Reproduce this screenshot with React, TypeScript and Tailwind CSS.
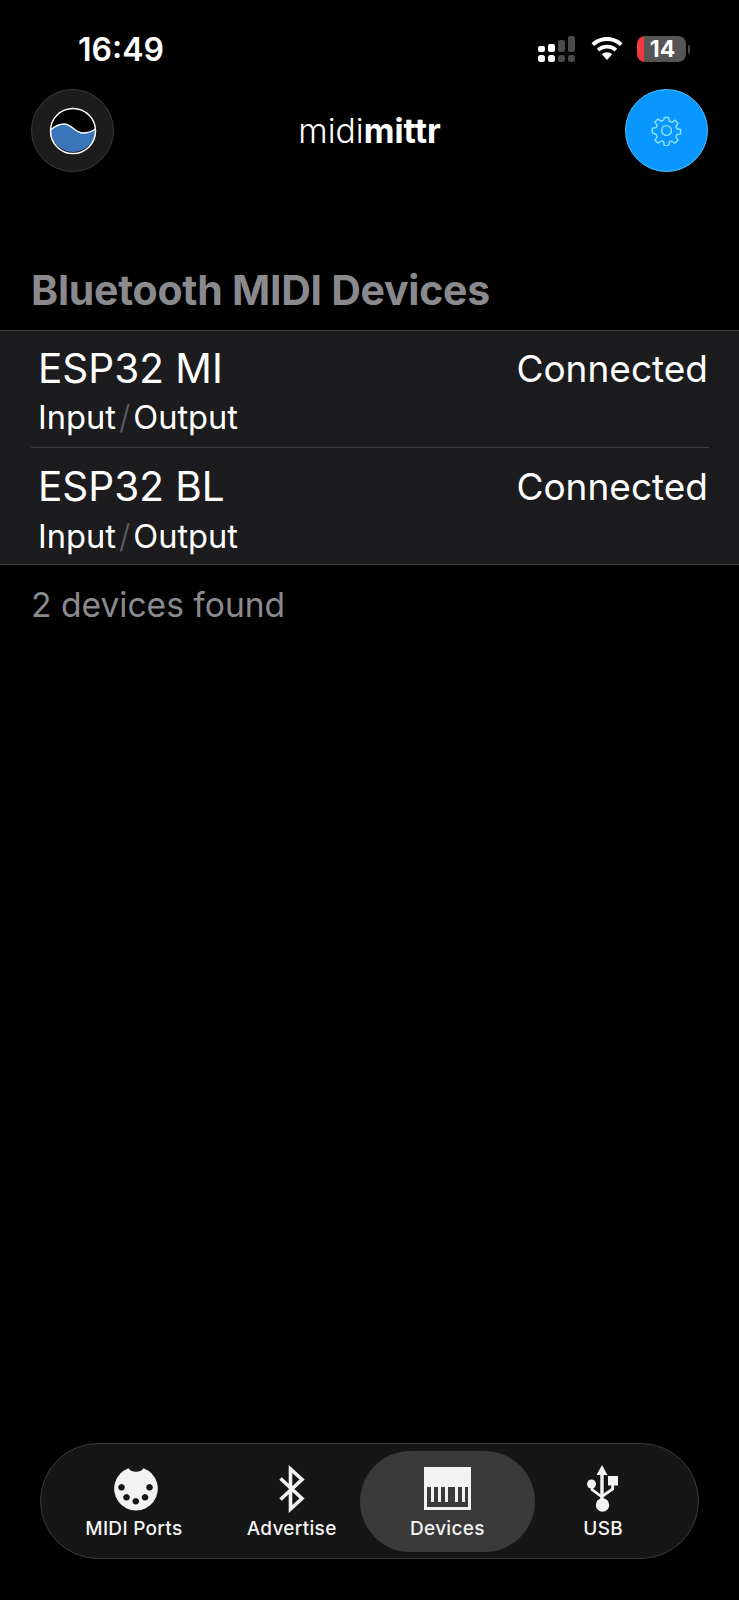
const Gear = () => (
  <svg width="31" height="31" viewBox="0 0 24 24" fill="none" stroke="#8fe4ff" strokeWidth="1.1" strokeLinejoin="round">
    <path d="M10.300 2h3.400l.5 2.900 1.900.8 2.400-1.700 2.400 2.400-1.700 2.400.8 1.900 2.900.5v3.400l-2.900.5-.8 1.900 1.700 2.400-2.400 2.400-2.400-1.700-1.900.8-.5 2.900h-3.400l-.5-2.900-1.900-.8-2.400 1.700-2.400-2.400 1.700-2.400-.8-1.900L1 13.700v-3.400l2.900-.5.8-1.900L3 5.500l2.400-2.400 2.400 1.700 1.900-.8z" />
    <circle cx="12" cy="12" r="3.800" />
  </svg>
);

const wave = "M1.500 23C6 19 10 17 15 17C23 17 26 26 34 26C39 26 43 24.500 46.500 22";

const Logo = () => (
  <svg width="48" height="48" viewBox="0 0 48 48">
    <circle cx="24" cy="24" r="22.500" fill="#000" />
    <path d={`${wave}A22.500 22.500 0 0 1 1.500 23Z`} fill="#3a75ba" />
    <path d={wave} fill="none" stroke="#fff" strokeWidth="1.500" />
    <circle cx="24" cy="24" r="22.500" fill="none" stroke="#fff" strokeWidth="1.500" />
  </svg>
);

const Din = () => (
  <svg width="44" height="44" viewBox="0 0 44 44">
    <path fillRule="evenodd" fill="#f2f2f2" d="M14.500 1.300A21.800 21.800 0 1 0 29.500 1.300C27 6 17 6 14.500 1.300ZM7.500 17a3.300 3.300 0 1 0 .01 0ZM35.500 17a3.300 3.300 0 1 0 .01 0ZM12.500 27a3.300 3.300 0 1 0 .01 0ZM31 27a3.300 3.300 0 1 0 .01 0ZM21.800 31a3.300 3.300 0 1 0 .01 0Z" />
  </svg>
);

const Bt = () => (
  <svg width="26" height="48" viewBox="0 0 26 48" fill="none" stroke="#f2f2f2" strokeWidth="3.600">
    <path d="M1.500 13.500 23 33.500 11.500 44V4L23 14.500 1.500 34.500" />
  </svg>
);

const Piano = () => (
  <svg width="47" height="43" viewBox="0 0 47 43">
    <path fillRule="evenodd" fill="#f2f2f2" d="M0 0H47V43H0ZM3 20V40H44V20H41V35H38V20H34V35H31V20H24V35H21V20H17V35H14V20H10V35H7V20Z" />
  </svg>
);

const Usb = () => (
  <svg width="32" height="47" viewBox="0 0 32 47">
    <path fill="#f2f2f2" d="M15 0l5.500 10h-3.800v25h-3.400V10H9.500Z" />
    <circle cx="15.500" cy="40" r="6.700" fill="#f2f2f2" />
    <circle cx="4.500" cy="19" r="4.500" fill="#f2f2f2" />
    <path fill="#f2f2f2" d="M21 11h10v9.500H21z" />
    <path d="M5 22v2.500L15 32M25.700 19v5L15.500 31" fill="none" stroke="#f2f2f2" strokeWidth="2.800" />
  </svg>
);

const Wifi = () => (
  <svg width="32" height="24" viewBox="0 0 32 24">
    <path fill="#fff" d="M16 0c6 0 11.500 2.300 15.500 6.200l-2.600 2.900C25.500 5.800 21 3.900 16 3.900S6.500 5.800 3.100 9.100L.5 6.200C4.500 2.300 10 0 16 0Z" />
    <path fill="#fff" d="M16 7.700c3.900 0 7.500 1.500 10.200 4l-2.600 2.900c-2-1.800-4.700-3-7.600-3s-5.600 1.200-7.600 3l-2.600-2.900c2.700-2.500 6.300-4 10.200-4Z" />
    <path fill="#fff" d="M16 15.300c2 0 3.800.7 5.100 1.900L16 23l-5.100-5.800c1.300-1.200 3.100-1.900 5.100-1.900Z" />
  </svg>
);

const Cell = () => (
  <svg width="37" height="26" viewBox="0 0 37 26">
    <g fill="#fff">
      <rect x="0" y="10" width="7" height="6" rx="2" />
      <rect x="10" y="8" width="7" height="8" rx="2" />
      <rect x="0" y="19" width="7" height="7" rx="2.500" />
      <rect x="10" y="19" width="7" height="7" rx="2.500" />
    </g>
    <g fill="#4a4a4a">
      <rect x="20" y="4" width="7" height="12" rx="2" />
      <rect x="30" y="0" width="7" height="16" rx="2" />
      <rect x="20" y="19" width="7" height="7" rx="2.500" />
      <rect x="30" y="19" width="7" height="7" rx="2.500" />
    </g>
  </svg>
);

const devices = ["ESP32 MI", "ESP32 BL"];

const tabs = [
  { label: "MIDI Ports", icon: <Din />, active: false, labelClass: "mr-[4px]" },
  { label: "Advertise", icon: <Bt />, active: false, labelClass: "" },
  { label: "Devices", icon: <Piano />, active: true, labelClass: "" },
  { label: "USB", icon: <Usb />, active: false, labelClass: "" },
];

export default function App() {
  return (
    <div className="flex h-[1600px] w-[739px] flex-col bg-black font-['Inter',sans-serif] text-white antialiased">
      <div className="flex h-[89px] items-start justify-between pl-[78px] pr-[49px] pt-[30px]">
        <span className="text-[32px] leading-[40px] font-semibold">16:49</span>
        <div className="flex items-center gap-[14px] pt-[6px]">
          <div className="mr-[2px] flex">
            <Cell />
          </div>
          <Wifi />
          <div className="flex items-center gap-[2px]">
            <div className="flex h-[26px] w-[49px] items-center justify-center overflow-hidden rounded-[8px] bg-[linear-gradient(90deg,#ef3a3f_15%,#555555_15%)] pl-[2px] text-[23px] font-bold leading-none">
              14
            </div>
            <div className="h-[9px] w-[2px] rounded-r-full bg-[#4a4a4a]" />
          </div>
        </div>
      </div>

      <div className="flex items-center justify-between px-[31px]">
        <div className="flex size-[83px] items-center justify-center rounded-full border border-[#3a3a3a] bg-[#1c1c1c]">
          <Logo />
        </div>
        <div className="text-[33.7px] leading-[40px] font-light">
          midi<span className="font-bold">mittr</span>
        </div>
        <div className="flex size-[83px] items-center justify-center rounded-full border border-[#4cc4ff] bg-[#0a96ff]">
          <Gear />
        </div>
      </div>

      <h1 className="mt-[94px] pl-[31px] text-[41px] leading-[48px] font-bold tracking-[-0.25px] text-[#8a8a8e]">
        Bluetooth MIDI Devices
      </h1>

      <div className="mt-[16px] border-y border-[#3d3d40] bg-[#1c1c1e] pl-[31px] pr-[30px]">
        {devices.map((name, i) => (
          <div
            key={name}
            className={`flex flex-col pl-[7px] ${i === 0 ? "h-[117px] border-b border-[#3d3d40] pt-[14px]" : "h-[116px] pt-[15px]"}`}
          >
            <div className="flex items-center justify-between pr-[1px]">
              <span className="text-[40.5px] leading-[48px]">{name}</span>
              <span className="text-[37px] leading-[48px]">Connected</span>
            </div>
            <div className={`${i === 0 ? "mt-[2px]" : "mt-[3px]"} text-[32.6px] leading-[44px]`}>
              Input<span className="px-[3px] font-light text-[#5e5e62]">/</span>Output
            </div>
          </div>
        ))}
      </div>

      <p className="mt-[18px] pl-[31px] text-[33.6px] leading-[44px] text-[#8a8a8e]">2 devices found</p>

      <div className="mx-[40px] mb-[41px] mt-auto grid h-[116px] grid-cols-4 items-center rounded-full border border-[#3a3a3a] bg-[#161616] px-[17px]">
        {tabs.map((t) => (
          <div
            key={t.label}
            className={`flex h-[101px] flex-col items-center justify-start pt-[14px] ${t.active ? "-mx-[10px] rounded-full bg-[#3a3a3a]" : ""}`}
          >
            <div className="flex h-[48px] items-center justify-center">{t.icon}</div>
            <span className={`mt-[4px] text-[19px] leading-[24px] font-medium tracking-[0.3px] text-[#f2f2f2] ${t.labelClass}`}>{t.label}</span>
          </div>
        ))}
      </div>
    </div>
  );
}
